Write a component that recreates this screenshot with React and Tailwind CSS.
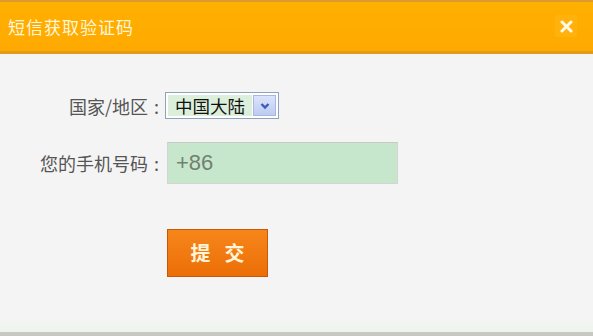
export default function App() {
  return (
    <div
      className="flex h-[336px] w-[593px] flex-col overflow-hidden bg-[#f4f4f4]"
      style={{ fontFamily: '"Noto Sans CJK SC", "Liberation Sans", sans-serif' }}
    >
      {/* header */}
      <div className="flex h-[54px] shrink-0 items-center justify-between border-t-[2px] border-b-[3px] border-t-[#dc9a30] border-b-[#e39a1a] bg-gradient-to-b from-[#ffb000] to-[#ffa900] pb-[1px] pl-[8px] pr-[16px]">
        <span className="text-[17px] leading-none tracking-[1px] text-[#fff6dc]">短信获取验证码</span>
        <button type="button" className="flex h-[22px] w-[22px] items-center justify-center rounded-[2px] bg-[#ffb20e]">
          <svg width="13" height="13" viewBox="0 0 13 13">
            <path d="M2 2 L11 11 M11 2 L2 11" stroke="#fff9e8" strokeWidth="3" strokeLinecap="round" />
          </svg>
        </button>
      </div>

      {/* body */}
      <div className="flex flex-1 flex-col pt-[38px]">
        <div className="flex items-center">
          <label className="flex w-[165px] items-center justify-end text-[18px] leading-none text-[#555]">
            国家/地区<span className="inline-block w-[17px] text-center">:</span>
          </label>
          <div className="flex h-[27px] w-[114px] items-center border border-[#8fa3bb] bg-white p-[2px]">
            <span className="flex h-full flex-1 items-center bg-[#dcefdb] pl-[7px] text-[17.5px] leading-none text-[#111]">
              中国大陆
            </span>
            <span className="ml-[1px] flex h-full w-[23px] items-center justify-center border border-[#aab8e0] bg-gradient-to-b from-[#dbe4fb] to-[#bccbf2]">
              <svg width="10" height="8" viewBox="0 0 10 8">
                <path d="M1.5 2 L5 5.5 L8.5 2" fill="none" stroke="#3d5bb8" strokeWidth="2.4" />
              </svg>
            </span>
          </div>
        </div>

        <div className="mt-[23px] flex items-center">
          <label className="flex w-[165px] items-center justify-end text-[18px] leading-none text-[#555]">
            您的手机号码<span className="inline-block w-[17px] text-center">:</span>
          </label>
          <div className="ml-[2px] flex h-[42px] w-[231px] items-center border border-[#d4d4d4] border-t-[#c8c8c8] bg-[#c7e7cd] pl-[8px]">
            <span
              className="text-[22px] leading-none text-[#72806f]"
              style={{ fontFamily: '"Liberation Sans", Arial, sans-serif' }}
            >
              +86
            </span>
          </div>
        </div>

        <div className="mt-[45px] flex pl-[167px]">
          <button
            type="button"
            className="flex h-[48px] w-[101px] items-center justify-center gap-[14px] border border-[#c65a08] bg-gradient-to-b from-[#f6861a] to-[#ec6e06] text-[20px] font-bold leading-none text-[#fff4d6]"
          >
            <span>提</span>
            <span>交</span>
          </button>
        </div>

        <div className="mt-auto h-[12px] bg-gradient-to-b from-[#f4f4f4] to-[#eef4ec]" />
      </div>
      <div className="h-[4px] shrink-0 bg-[#c6c8c4]" />
    </div>
  );
}
